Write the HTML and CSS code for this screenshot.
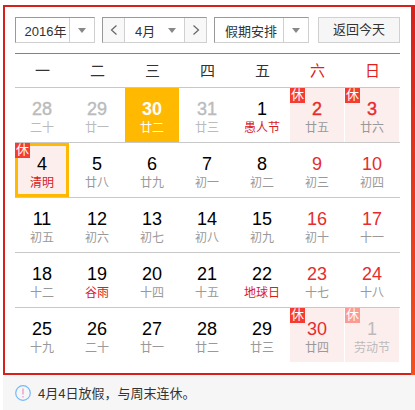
FILE: index.html
```html
<!DOCTYPE html>
<html lang="zh">
<head>
<meta charset="utf-8">
<title>万年历</title>
<link rel="stylesheet" href="styles.css">
</head>
<body>
<div class="frame">
 <div class="inner">
  <div class="toolbar">
    <div class="select year"><span class="val">2016年</span><span class="drop"><i class="caret"></i></span></div>
    <div class="select month">
      <span class="nav"><svg width="8" height="12" viewBox="0 0 8 12"><path d="M6.5 1.5L1.5 6l5 4.5" fill="none" stroke="#666" stroke-width="1.2"/></svg></span>
      <span class="val mval">4月<i class="caret"></i></span>
      <span class="nav navr"><svg width="8" height="12" viewBox="0 0 8 12"><path d="M1.5 1.5l5 4.5-5 4.5" fill="none" stroke="#666" stroke-width="1.2"/></svg></span>
    </div>
    <div class="select holiday"><span class="val">假期安排</span><span class="drop"><i class="caret"></i></span></div>
    <div class="today">返回今天</div>
  </div>
  <div class="cal">
    <div class="head">
      <span>一</span><span>二</span><span>三</span><span>四</span><span>五</span><span class="we">六</span><span class="we">日</span>
    </div>
    <div class="row">
      <div class="cell off strong"><b>28</b><small>二十</small></div>
      <div class="cell off strong"><b>29</b><small>廿一</small></div>
      <div class="cell sel"><b>30</b><small>廿二</small></div>
      <div class="cell off strong"><b>31</b><small>廿三</small></div>
      <div class="cell"><b>1</b><small class="fest">愚人节</small></div>
      <div class="cell rest we strong"><em>休</em><b>2</b><small>廿五</small></div>
      <div class="cell rest we strong"><em>休</em><b>3</b><small>廿六</small></div>
    </div>
    <div class="row">
      <div class="cell rest cur"><em>休</em><b>4</b><small class="fest">清明</small></div>
      <div class="cell"><b>5</b><small>廿八</small></div>
      <div class="cell"><b>6</b><small>廿九</small></div>
      <div class="cell"><b>7</b><small>初一</small></div>
      <div class="cell"><b>8</b><small>初二</small></div>
      <div class="cell we"><b>9</b><small>初三</small></div>
      <div class="cell we"><b>10</b><small>初四</small></div>
    </div>
    <div class="row">
      <div class="cell"><b>11</b><small>初五</small></div>
      <div class="cell"><b>12</b><small>初六</small></div>
      <div class="cell"><b>13</b><small>初七</small></div>
      <div class="cell"><b>14</b><small>初八</small></div>
      <div class="cell"><b>15</b><small>初九</small></div>
      <div class="cell we"><b>16</b><small>初十</small></div>
      <div class="cell we"><b>17</b><small>十一</small></div>
    </div>
    <div class="row">
      <div class="cell"><b>18</b><small>十二</small></div>
      <div class="cell"><b>19</b><small class="fest">谷雨</small></div>
      <div class="cell"><b>20</b><small>十四</small></div>
      <div class="cell"><b>21</b><small>十五</small></div>
      <div class="cell"><b>22</b><small class="fest">地球日</small></div>
      <div class="cell we"><b>23</b><small>十七</small></div>
      <div class="cell we"><b>24</b><small>十八</small></div>
    </div>
    <div class="row">
      <div class="cell"><b>25</b><small>十九</small></div>
      <div class="cell"><b>26</b><small>二十</small></div>
      <div class="cell"><b>27</b><small>廿一</small></div>
      <div class="cell"><b>28</b><small>廿二</small></div>
      <div class="cell"><b>29</b><small>廿三</small></div>
      <div class="cell rest we"><em>休</em><b>30</b><small>廿四</small></div>
      <div class="cell rest off"><em>休</em><b>1</b><small>劳动节</small></div>
    </div>
  </div>
 </div>
</div>
<div class="tip">
  <svg width="16" height="16" viewBox="0 0 16 16"><circle cx="8" cy="8" r="7.3" fill="none" stroke="#74b8fb" stroke-width="1.2"/><path d="M8 3.5v6M8 11v1.6" stroke="#e79ac6" stroke-width="1.3" fill="none"/></svg>
  <span>4月4日放假，与周末连休。</span>
</div>
</body>
</html>
```

FILE: styles.css
```css
* { box-sizing: border-box; }
html, body { margin: 0; padding: 0; }
body {
  width: 415px;
  height: 410px;
  overflow: hidden;
  background: #fff;
  padding-left: 3px;
  padding-top: 5px;
  font-family: "Liberation Sans", "Noto Sans CJK SC", sans-serif;
  font-size: 13px;
  color: #333;
}
.frame {
  width: 412px;
  height: 370px;
  padding-right: 4px;
  background: linear-gradient(#d7201c, #f4511e);
}
.inner {
  height: 100%;
  background: #fff;
  border: 2px solid #d7201c;
  border-right: 0;
  padding: 10px 0 0 10px;
}
.toolbar { display: flex; height: 26px; width: 385px; }
.select {
  display: flex;
  align-items: center;
  height: 26px;
  border: 1px solid #d0d0d0;
  border-top-color: #999;
  border-left-color: #999;
}
.year { width: 80px; margin-right: 7px; }
.year .val { padding-left: 6px; }
.month { width: 105px; margin-right: 7px; }
.holiday { width: 95px; margin-right: 9px; }
.holiday .val { padding-left: 4px; }
.val { flex: 1; text-align: center; }
.drop {
  width: 25px;
  height: 100%;
  border-left: 1px solid #d0d0d0;
  display: flex;
  align-items: center;
  justify-content: center;
}
.caret {
  display: inline-block;
  width: 0;
  height: 0;
  border: 4px solid transparent;
  border-top: 5px solid #888;
  border-bottom: 0;
}
.nav {
  width: 22px;
  height: 100%;
  background: #f8f8f8;
  display: flex;
  align-items: center;
  justify-content: center;
  border-right: 1px solid #d0d0d0;
}
.navr { border-right: 0; border-left: 1px solid #d0d0d0; }
.mval {
  display: flex;
  align-items: center;
  justify-content: space-between;
  padding: 0 8px 0 10px;
}
.today {
  width: 82px;
  height: 26px;
  border: 1px solid #d0d0d0;
  background: #f6f6f6;
  text-align: center;
  line-height: 24px;
}
.cal { width: 385px; margin-top: 10px; border-top: 1px solid #e8584f; }
.head {
  display: grid;
  grid-template-columns: repeat(7, 55px);
  height: 34px;
  border-bottom: 1px solid #c8c8c8;
  font-size: 15px;
}
.head span { text-align: center; line-height: 34px; }
.head .we { color: #e02020; }
.row {
  display: grid;
  grid-template-columns: repeat(7, 55px);
  height: 55px;
  border-bottom: 1px solid #c8c8c8;
}
.row:last-child { border-bottom: 0; }
.cell {
  position: relative;
  height: 54px;
  margin-right: 1px;
  text-align: center;
  padding-top: 11px;
}
.cell b {
  display: block;
  font-weight: 400;
  font-size: 18px;
  line-height: 20px;
  color: #000;
}
.cell small {
  display: block;
  font-size: 12px;
  line-height: 16px;
  margin-top: 1px;
  color: #999;
}
.cell small.fest { color: #d7201c; }
.cell.we b { color: #e62c2c; }
.cell.off b { color: #bbb; }
.cell.off small { color: #bbb; }
.cell.sel { background: #ffb900; }
.cell.sel b { color: #fff; font-weight: 700; }
.cell.sel small { color: #fff; }
.cell.strong b { -webkit-text-stroke: 0.4px currentColor; }
.cell.rest { background: #fdeeee; }
.cell em {
  position: absolute;
  left: 0;
  top: 0;
  width: 15px;
  height: 15px;
  background: #f43c30;
  color: #fff;
  font-style: normal;
  font-size: 13px;
  line-height: 14px;
  text-align: center;
}
.cell.off em { background: #fc9a94; }
.cell.cur { border: 3px solid #ffb900; padding-top: 8px; }
.cell.cur em { left: -3px; top: -3px; }
.tip {
  display: flex;
  align-items: center;
  gap: 7px;
  width: 412px;
  height: 35px;
  background: #f6f6f6;
  padding-left: 12px;
  font-size: 13px;
}
```
